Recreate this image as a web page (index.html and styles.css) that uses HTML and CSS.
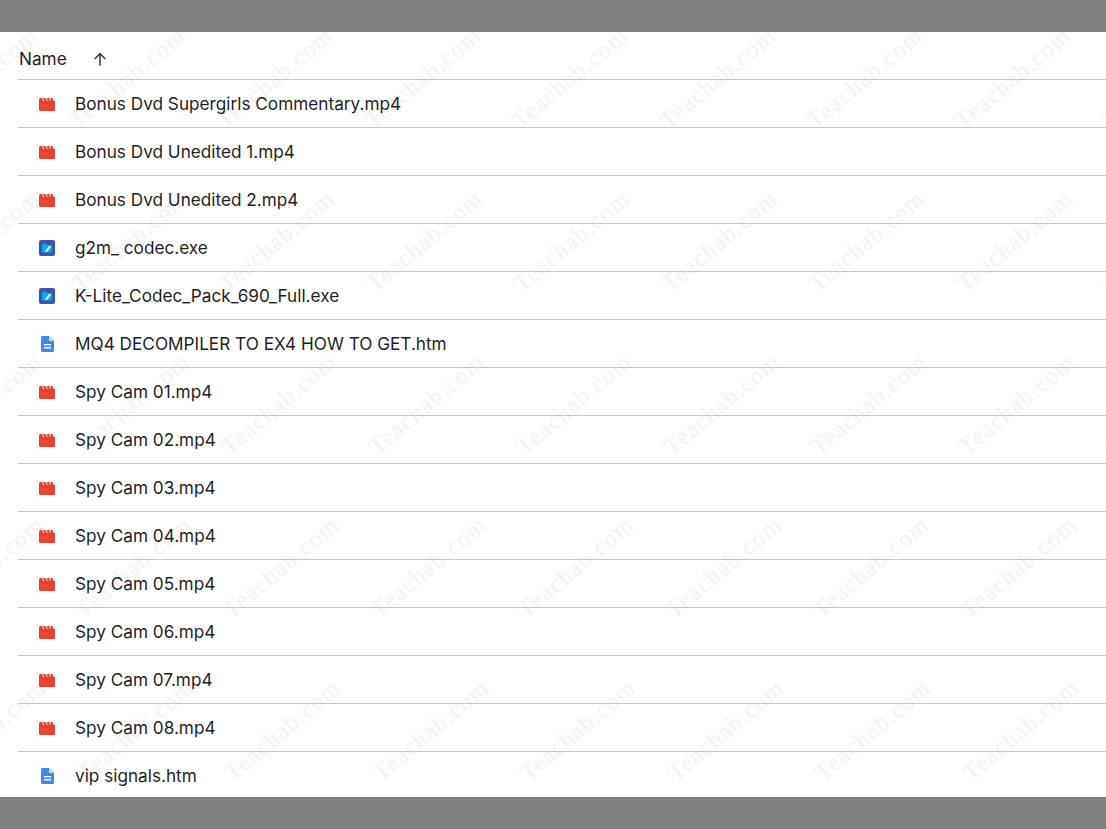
FILE: index.html
```html
<!DOCTYPE html>
<html lang="en">
<head>
<meta charset="utf-8">
<title>Files</title>
<link rel="stylesheet" href="styles.css">
</head>
<body>
<svg class="defs" width="0" height="0" aria-hidden="true">
  <symbol id="video" viewBox="0 0 16 13"><path d="M0 1.5 Q0 0 1.5 0 H3 L4.2 2.8 H5.2 L4 0 H6.5 L7.7 2.8 H8.7 L7.5 0 H10 L11.2 2.8 H12.2 L11 0 H13.5 L14.7 2.8 H16 V11.5 Q16 13 14.5 13 H1.5 Q0 13 0 11.5 Z" fill="#ea4335"/></symbol>
  <symbol id="exe" viewBox="0 0 16 16"><rect width="16" height="16" rx="2" fill="#3f51b5"/><path d="M3 4 H7 L8 5 H13 V12.5 H3 Z" fill="#03a9f4"/><path d="M6.5 12 L6.5 10.4 L10.6 5.6 L12 6.8 L8 12 Z" fill="#fff"/></symbol>
  <symbol id="doc" viewBox="0 0 13 16"><path d="M1.5 0 H8 L13 5 V14.5 C13 15.4 12.4 16 11.5 16 H1.5 C.6 16 0 15.4 0 14.5 V1.5 C0 .6 .6 0 1.5 0 Z" fill="#4285f4"/><path d="M8 .6 V5 H12.4 Z" fill="#d5e3fc"/><path d="M3 8 H10 V9.5 H3 Z M3 11 H10 V12.5 H3 Z" fill="#fff"/></symbol>
</svg>
<div class="band"></div>
<main class="sheet">
  <div class="marks" aria-hidden="true">
    <div class="mrow r0"><span>Teachab.com</span><span>Teachab.com</span><span>Teachab.com</span><span>Teachab.com</span><span>Teachab.com</span><span>Teachab.com</span><span>Teachab.com</span><span>Teachab.com</span><span>Teachab.com</span></div>
    <div class="mrow r1"><span>Teachab.com</span><span>Teachab.com</span><span>Teachab.com</span><span>Teachab.com</span><span>Teachab.com</span><span>Teachab.com</span><span>Teachab.com</span><span>Teachab.com</span><span>Teachab.com</span></div>
    <div class="mrow r2"><span>Teachab.com</span><span>Teachab.com</span><span>Teachab.com</span><span>Teachab.com</span><span>Teachab.com</span><span>Teachab.com</span><span>Teachab.com</span><span>Teachab.com</span><span>Teachab.com</span></div>
    <div class="mrow r3"><span>Teachab.com</span><span>Teachab.com</span><span>Teachab.com</span><span>Teachab.com</span><span>Teachab.com</span><span>Teachab.com</span><span>Teachab.com</span><span>Teachab.com</span><span>Teachab.com</span></div>
    <div class="mrow r4"><span>Teachab.com</span><span>Teachab.com</span><span>Teachab.com</span><span>Teachab.com</span><span>Teachab.com</span><span>Teachab.com</span><span>Teachab.com</span><span>Teachab.com</span><span>Teachab.com</span></div>
  </div>
  <div class="head"><span class="head-name">Name</span>
    <svg class="arrow" viewBox="0 0 16 16" width="16" height="16"><path d="M8 14.5 V2.8 M2.6 8 L8 2.6 L13.4 8" fill="none" stroke="#3c4043" stroke-width="1.6"/></svg>
  </div>
  <ul class="list">
    <li class="row"><span class="ic"><svg class="i-video"><use href="#video"/></svg></span>Bonus Dvd Supergirls Commentary.mp4</li>
    <li class="row"><span class="ic"><svg class="i-video"><use href="#video"/></svg></span>Bonus Dvd Unedited 1.mp4</li>
    <li class="row"><span class="ic"><svg class="i-video"><use href="#video"/></svg></span>Bonus Dvd Unedited 2.mp4</li>
    <li class="row"><span class="ic"><svg class="i-exe"><use href="#exe"/></svg></span>g2m_ codec.exe</li>
    <li class="row"><span class="ic"><svg class="i-exe"><use href="#exe"/></svg></span>K-Lite_Codec_Pack_690_Full.exe</li>
    <li class="row"><span class="ic"><svg class="i-doc"><use href="#doc"/></svg></span>MQ4 DECOMPILER TO EX4 HOW TO GET.htm</li>
    <li class="row"><span class="ic"><svg class="i-video"><use href="#video"/></svg></span>Spy Cam 01.mp4</li>
    <li class="row"><span class="ic"><svg class="i-video"><use href="#video"/></svg></span>Spy Cam 02.mp4</li>
    <li class="row"><span class="ic"><svg class="i-video"><use href="#video"/></svg></span>Spy Cam 03.mp4</li>
    <li class="row"><span class="ic"><svg class="i-video"><use href="#video"/></svg></span>Spy Cam 04.mp4</li>
    <li class="row"><span class="ic"><svg class="i-video"><use href="#video"/></svg></span>Spy Cam 05.mp4</li>
    <li class="row"><span class="ic"><svg class="i-video"><use href="#video"/></svg></span>Spy Cam 06.mp4</li>
    <li class="row"><span class="ic"><svg class="i-video"><use href="#video"/></svg></span>Spy Cam 07.mp4</li>
    <li class="row"><span class="ic"><svg class="i-video"><use href="#video"/></svg></span>Spy Cam 08.mp4</li>
    <li class="row"><span class="ic"><svg class="i-doc"><use href="#doc"/></svg></span>vip signals.htm</li>
  </ul>
</main>
<div class="band band-bottom"></div>
</body>
</html>
```
FILE: styles.css
```css
html, body { margin: 0; padding: 0; height: 829px; overflow: hidden; background: #fff; }
body { display: flex; flex-direction: column; font-family: Inter, Roboto, sans-serif; color: #1f1f1f; }
.defs { position: absolute; }
.band { height: 32px; background: #808080; flex: none; }
.band-bottom { flex: 1; }
.sheet { position: relative; height: 765px; padding-left: 18px; overflow: hidden; flex: none; }
.head { position: relative; padding-top: 6px; height: 41px; display: flex; align-items: center; padding-left: 1px; border-bottom: 1px solid #c7c7c7; font-size: 17.2px; }
.head-name { width: 73px; }
.arrow { display: block; }
.list { position: relative; list-style: none; margin: 0; padding: 0; }
.row { height: 47px; display: flex; align-items: center; border-bottom: 1px solid #c7c7c7; font-size: 17.2px; white-space: nowrap; }
.ic { width: 57px; padding: 1px 0 0 21px; box-sizing: border-box; display: flex; align-items: center; }
.i-video { width: 16px; height: 13px; }
.i-exe { width: 16px; height: 16px; }
.i-doc { width: 13px; height: 16px; margin-left: 1.5px; }
.marks { position: absolute; inset: 0; pointer-events: none; }
.mrow { position: absolute; display: flex; left: -94px; }
.mrow span { flex: none; width: 147.5px; height: 20px; display: flex; align-items: center; justify-content: center; white-space: nowrap; transform: rotate(-40deg); font-family: "Liberation Serif", serif; font-size: 24.5px; letter-spacing: 1.2px; color: #f3f3f3; }
.r0 { top: 36px; }
.r1 { top: 199px; left: -92px; }
.r2 { top: 362px; left: -90px; }
.r3 { top: 525px; left: -88px; }
.r4 { top: 688px; left: -86px; }
```
